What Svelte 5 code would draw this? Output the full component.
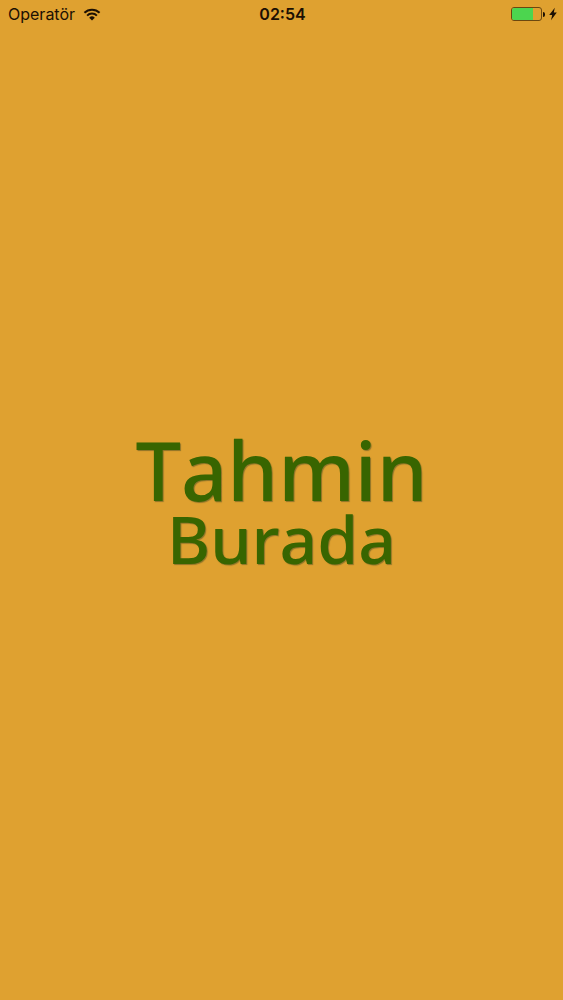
<script>
  let carrier = $state('Operatör');
  let time = $state('02:54');
  let battery = $state(71);
</script>

<div class="screen">
  <header class="status-bar">
    <div class="carrier">
      <span>{carrier}</span>
      <svg class="wifi" viewBox="0 0 18 13" aria-hidden="true">
        <path d="M1.4 4.8 A10.8 10.8 0 0 1 16.6 4.8" />
        <path d="M4.1 7.6 A7 7 0 0 1 13.9 7.6" />
        <path class="dot" d="M6.2 9.7 A4 4 0 0 1 11.8 9.7 L9 12.6 Z" />
      </svg>
    </div>
    <time>{time}</time>
    <div class="power">
      <div class="battery"><div class="level" style="width: {battery}%"></div></div>
      <div class="cap"></div>
      <svg class="bolt" viewBox="0 0 8 14" aria-hidden="true">
        <path d="M5.8 0.8 L0.2 8 H3.2 L2 13.2 L7.8 5.6 H4.8 Z" />
      </svg>
    </div>
  </header>

  <main class="splash">
    <h1>
      <span class="title">Tahmin</span>
      <span class="subtitle">Burada</span>
    </h1>
  </main>
</div>

<style>
  :global(body) { margin: 0; background: #dfa130; }
  .screen { min-height: 100vh; display: flex; flex-direction: column; background: #dfa130; }
  .status-bar { display: grid; grid-template-columns: 1fr auto 1fr; align-items: center; height: 28px; padding: 0 6px 0 8px; font-family: Inter, "Liberation Sans", sans-serif; font-size: 16px; color: #1c1003; }
  .carrier { display: flex; align-items: center; gap: 8px; }
  .wifi { width: 18px; height: 13px; fill: none; stroke: #1c1003; stroke-width: 2; }
  .wifi .dot { fill: #1c1003; stroke: none; }
  time { font-weight: 600; }
  .power { display: flex; align-items: center; justify-content: flex-end; }
  .battery { box-sizing: border-box; width: 31px; height: 14px; border: 1px solid #6b470f; border-radius: 3px; overflow: hidden; }
  .level { height: 100%; background: #4cd54f; }
  .cap { width: 2px; height: 5px; margin: 0 4px 0 1px; border-radius: 0 2px 2px 0; background: #1c1003; }
  .bolt { width: 8px; height: 14px; fill: #1c1003; }
  .splash { flex: 1; display: flex; align-items: center; justify-content: center; padding-bottom: 24px; }
  h1 { display: flex; flex-direction: column; align-items: center; margin: 0; font-family: "Noto Sans", "Open Sans", sans-serif; font-weight: 500; font-kerning: none; color: #386500; text-shadow: 1px 1px 1px #8d7328; }
  .title { font-size: 81px; line-height: 72px; }
  .subtitle { font-size: 66px; line-height: 64px; }
</style>
